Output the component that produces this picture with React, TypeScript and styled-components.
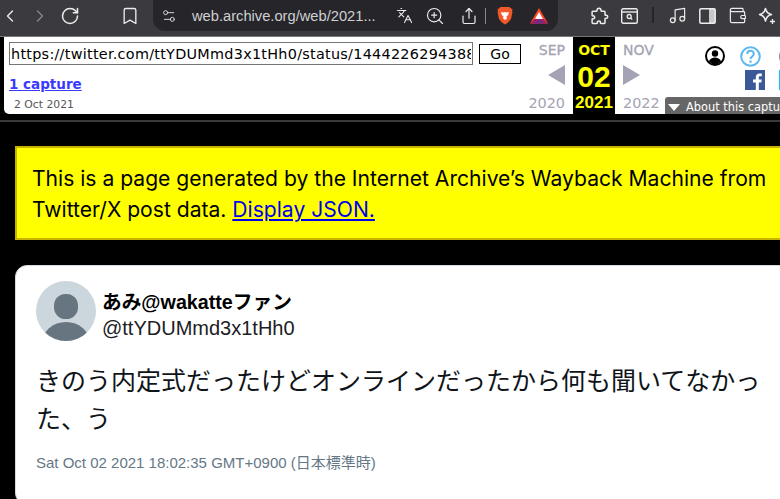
import React from 'react';
import styled, { createGlobalStyle } from 'styled-components';
import { Bookmark, ChevronLeft, ChevronRight, Languages, Music, RotateCw, Settings2, Share, Wallet, ZoomIn } from 'lucide-react';

const GlobalStyle = createGlobalStyle`
  html, body {
    margin: 0;
    padding: 0;
    background: #000;
    overflow: hidden;
  }
`;

const Page = styled.div`
  width: 780px;
  height: 499px;
  overflow: hidden;
  background: #000;
  font-family: 'Noto Sans CJK JP', 'Liberation Sans', sans-serif;
`;

const BrowserBar = styled.header`
  height: 37px;
  background: #3b3b3f;
  border-bottom: 1px solid #77777a;
  box-sizing: border-box;
  display: flex;
  align-items: flex-start;
`;

const NavButton = styled.span<{ dim?: boolean; w?: number; ml?: number }>`
  width: ${({ w = 20 }) => w}px;
  height: 31px;
  margin-left: ${({ ml = 0 }) => ml}px;
  flex: none;
  display: flex;
  align-items: center;
  justify-content: center;
  color: ${({ dim }) => (dim ? '#85858a' : '#ececee')};
`;

const AddressPill = styled.div`
  width: 405px;
  height: 31px;
  flex: none;
  margin-left: 13px;
  background: #26262a;
  border-radius: 0 0 12px 12px;
  display: flex;
  align-items: center;
  padding-left: 8px;
  box-sizing: border-box;
  color: #d5d5d8;
`;

const UrlText = styled.span`
  font-family: 'Liberation Sans', sans-serif;
  font-size: 14.7px;
  color: #cfcfd2;
  margin-left: 15px;
  width: 202px;
  white-space: nowrap;
  flex: none;
`;

const PillDivider = styled.span`
  width: 1px;
  height: 16px;
  background: #8a8a8d;
  margin: 0 10px 0 6px;
`;

const BarDivider = styled.span`
  width: 2px;
  height: 16px;
  margin: 7px 0 0 13px;
  background: #26262a;
`;

const Wayback = styled.section`
  height: 77px;
  margin-left: 4px;
  background: #fff;
  border-radius: 0 0 0 5px;
  display: flex;
  overflow: hidden;
`;

const SearchColumn = styled.div`
  width: 521px;
  flex: none;
  padding: 5px 0 0 5px;
  box-sizing: border-box;
`;

const SearchRow = styled.div`
  display: flex;
  align-items: center;
  gap: 6px;
`;

const UrlInput = styled.input`
  width: 464px;
  height: 23px;
  box-sizing: border-box;
  border: 1px solid #767676;
  padding: 0 1px;
  font-family: 'DejaVu Sans', 'Liberation Sans', sans-serif;
  font-size: 14.4px;
  letter-spacing: 0.27px;
  color: #000;
`;

const GoButton = styled.button`
  width: 42px;
  height: 20px;
  padding: 0;
  background: #fff;
  border: 1px solid #000;
  font-family: 'DejaVu Sans', sans-serif;
  font-size: 14px;
  line-height: 16px;
  color: #000;
`;

const CaptureLink = styled.a`
  display: block;
  margin-top: 10px;
  font-family: 'DejaVu Sans', sans-serif;
  font-weight: 700;
  font-size: 13.5px;
  line-height: 18px;
  color: #3a3aff;
  text-decoration: underline;
`;

const CaptureDate = styled.div`
  margin: 5px 0 0 5px;
  font-family: 'DejaVu Sans', sans-serif;
  font-size: 10.8px;
  line-height: 14px;
  color: #555;
`;

const MonthColumn = styled.div<{ current?: boolean; w: number; side?: 'left' | 'right' }>`
  width: ${({ w }) => w}px;
  height: 77px;
  flex: none;
  box-sizing: border-box;
  display: flex;
  flex-direction: column;
  align-items: ${({ side }) =>
    side === 'left' ? 'flex-end' : side === 'right' ? 'flex-start' : 'center'};
  padding: ${({ side }) =>
    side === 'left' ? '0 8px 0 0' : side === 'right' ? '0 0 0 8px' : '0'};
  font-family: 'DejaVu Sans', sans-serif;
  background: ${({ current }) => (current ? '#000' : '#fff')};
  color: ${({ current }) => (current ? '#ff0' : '#a3a3b4')};
`;

const MonthLabel = styled.div<{ current?: boolean }>`
  margin-top: 4px;
  font-size: 14px;
  line-height: 18px;
  font-weight: ${({ current }) => (current ? 700 : 400)};
  -webkit-text-stroke: ${({ current }) => (current ? '0' : '0.3px')};
`;

const DayLabel = styled.div`
  font-family: 'Liberation Sans', sans-serif;
  font-size: 30px;
  line-height: 32px;
  font-weight: 700;
  margin-top: 2px;
`;

const YearLabel = styled.div<{ current?: boolean }>`
  font-family: ${({ current }) => (current ? "'Liberation Sans', sans-serif" : "'DejaVu Sans', sans-serif")};
  font-size: ${({ current }) => (current ? '17px' : '14.4px')};
  line-height: 18px;
  margin-top: ${({ current }) => (current ? '1px' : '9px')};
  font-weight: ${({ current }) => (current ? 700 : 400)};
`;

const Arrow = styled.div<{ dir: 'left' | 'right' }>`
  width: 0;
  height: 0;
  margin-top: 6px;
  border-top: 10px solid transparent;
  border-bottom: 10px solid transparent;
  ${({ dir }) =>
    dir === 'left'
      ? 'border-right: 17px solid #a3a3b4;'
      : 'border-left: 17px solid #a3a3b4;'}
`;

const ToolsColumn = styled.div`
  flex: 1;
  min-width: 0;
  display: flex;
  flex-direction: column;
`;

const ToolIcons = styled.div`
  display: flex;
  height: 60px;
  margin-left: 40px;
`;

const ToolStack = styled.div<{ ml?: number }>`
  flex: none;
  margin-left: ${({ ml = 0 }) => ml}px;
  display: flex;
  flex-direction: column;
  padding-top: 9px;
`;

const FacebookSlot = styled.div`
  margin: 3px 0 0 5px;
  height: 20px;
`;

const TwitterSlot = styled.div`
  margin-top: 3px;
  height: 20px;
`;

const AboutTab = styled.div`
  width: 130px;
  height: 17px;
  box-sizing: border-box;
  padding: 3px 0 0 3px;
  background: #666;
  border-radius: 3px 0 0 0;
  color: #fff;
  font-family: 'DejaVu Sans', sans-serif;
  font-size: 11.4px;
  line-height: 14px;
  white-space: nowrap;
  display: flex;
  align-items: center;
  gap: 6px;
`;

const TabCaret = styled.span`
  width: 0;
  height: 0;
  border-left: 6px solid transparent;
  border-right: 6px solid transparent;
  border-top: 7px solid #fff;
`;

const Rule = styled.div`
  height: 2px;
  margin-top: 6px;
  background: #3a3a3a;
`;

const Notice = styled.div`
  width: 900px;
  height: 94px;
  margin: 24px 0 0 15px;
  box-sizing: border-box;
  border: 2px solid #c8b400;
  background: #ff0;
  padding: 15px 15px 0;
  font-family: 'Inter', 'Noto Sans CJK JP', sans-serif;
  font-size: 21.1px;
  line-height: 31px;
  color: #000;
`;

const NoticeLink = styled.a`
  color: #00e;
  text-decoration: underline;
`;

const TweetCard = styled.article`
  width: 900px;
  height: 240px;
  margin: 25px 0 0 15px;
  box-sizing: border-box;
  background: #fff;
  border: 1px solid #d5dde3;
  border-radius: 12px;
  padding: 15px 20px;
`;

const Author = styled.div`
  display: flex;
  gap: 6px;
`;

const Avatar = styled.svg`
  width: 60px;
  height: 60px;
  flex: none;
`;

const Names = styled.div`
  padding-top: 8px;
`;

const DisplayName = styled.div`
  font-family: 'Liberation Sans', 'Noto Sans CJK JP', sans-serif;
  font-size: 19.7px;
  line-height: 26px;
  font-weight: 700;
  color: #000;
`;

const Handle = styled.div`
  font-family: 'Liberation Sans', sans-serif;
  font-size: 20px;
  line-height: 26px;
  color: #1c2024;
`;

const TweetBody = styled.p`
  width: 730px;
  margin: 19px 0 0;
  font-size: 25px;
  line-height: 38px;
  color: #0f1419;
`;

const TweetDate = styled.div`
  margin-top: 17px;
  font-family: 'Liberation Sans', 'Noto Sans CJK JP', sans-serif;
  font-size: 15px;
  line-height: 20px;
  color: #657786;
`;

const BraveIcon = () => (
  <svg width="16" height="20" viewBox="0 0 16 20">
    <path d="M3.500 1h9l1.500 1.500 1.500.5-.5 2 .5 1-1.500 7-3 3.500L8 18.500 5 16.500 2 13 .5 6l.5-1-.5-2L2 2.500z" fill="#f1592a" />
    <path d="M4 6l2.500.5L8 6l1.500.5L12 6l-.8 3-1.700 1.200.5 2L8 14l-2-1.800.5-2L4.800 9z" fill="#fff" />
  </svg>
);

const BatIcon = () => (
  <svg width="18" height="16" viewBox="0 0 18 16">
    <polygon points="9,0 18,15.500 0,15.500" fill="#ff4724" />
    <polygon points="0,15.500 4.500,11 13.500,11 18,15.500" fill="#9e1f63" />
    <polygon points="4.500,15.500 9,11 13.500,15.500" fill="#662d91" />
    <polygon points="9,4 13,11 5,11" fill="#fff" />
  </svg>
);

const PuzzleIcon = () => (
  <svg width="18" height="18" viewBox="0 0 18 18" fill="none" stroke="currentColor" strokeWidth="1.500" strokeLinejoin="round">
    <path d="M6 3.500c0-3 4-3 4 0 0 .5.300.8 1 .8h2.200c.5 0 .8.300.8.800v2.400c0 .6.300.9.800.800 2.500-.6 2.500 3.600 0 3-.5-.1-.8.200-.8.800v3.400c0 .6-.3.900-.8.900h-3c-.6 0-.9-.3-.8-.8.400-2.200-3.400-2.200-3 0 .1.500-.2.800-.8.800H2c-.6 0-.9-.3-.9-.9v-3c0-.6.300-.9.800-.8 2.400.500 2.400-3.300 0-2.800-.5.100-.8-.2-.8-.8V5.100c0-.5.300-.8.800-.8H5c.7 0 1-.3 1-.8z" />
  </svg>
);

const ReaderIcon = () => (
  <svg width="17" height="16" viewBox="0 0 17 16" fill="none" stroke="currentColor" strokeWidth="1.400">
    <rect x="0.700" y="0.700" width="15.600" height="14.600" rx="1.500" />
    <path d="M.7 4h15.600" />
    <circle cx="8.200" cy="8.500" r="2" strokeWidth="1.300" />
    <path d="M9.700 10l1.500 1.500" strokeWidth="1.300" />
  </svg>
);

const SidebarIcon = () => (
  <svg width="17" height="16" viewBox="0 0 17 16">
    <rect x="0.800" y="0.800" width="15.400" height="14.400" rx="1.200" fill="none" stroke="currentColor" strokeWidth="1.500" />
    <rect x="10" y="1" width="6" height="14" fill="currentColor" opacity="0.8" />
  </svg>
);

const SparkleIcon = () => (
  <svg width="18" height="18" viewBox="0 0 18 18" fill="none" stroke="currentColor" strokeWidth="1.500" strokeLinejoin="round">
    <path d="M7.500 1.500c.8 3.800 2.300 5.300 6 6-3.700.8-5.200 2.300-6 6.500-.8-4.200-2.300-5.700-6-6.500 3.700-.7 5.200-2.200 6-6z" />
    <path d="M14.500 12v5M12 14.500h5" strokeWidth="1.300" />
  </svg>
);

const ProfileIcon = () => (
  <svg width="20" height="20" viewBox="0 0 20 20">
    <circle cx="10" cy="10" r="9" fill="#fff" stroke="#000" strokeWidth="2" />
    <circle cx="10" cy="7.500" r="3.200" fill="#000" />
    <path d="M3.800 15.500c1.500-3 3.500-4 6.200-4s4.700 1 6.200 4a8.400 8.400 0 0 1-12.400 0z" fill="#000" />
  </svg>
);

const HelpIcon = () => (
  <svg width="21" height="21" viewBox="0 0 21 21">
    <circle cx="10.500" cy="10.500" r="9.300" fill="none" stroke="#5cb8f0" strokeWidth="2" />
    <path d="M7.200 8c0-4.400 6.600-4.400 6.600 0 0 2.400-3.300 2.600-3.300 5" fill="none" stroke="#5cb8f0" strokeWidth="2" />
    <rect x="9.400" y="14.500" width="2.200" height="2.200" fill="#5cb8f0" />
  </svg>
);

const FacebookIcon = () => (
  <svg width="20" height="20" viewBox="0 0 20 20">
    <rect width="20" height="20" fill="#3b5998" />
    <path d="M13.800 20v-7.600h2.500l.4-3h-2.900V7.600c0-.9.300-1.400 1.500-1.400h1.500V3.500c-.3 0-1.200-.1-2.200-.1-2.300 0-3.800 1.400-3.800 3.900v2.100H8v3h2.800V20z" fill="#fff" />
  </svg>
);

const ShareCircle = () => (
  <svg width="21" height="21" viewBox="0 0 21 21">
    <circle cx="10.500" cy="10.500" r="10.500" fill="#8a8a8a" />
  </svg>
);

const TwitterSquare = () => (
  <svg width="20" height="20" viewBox="0 0 20 20">
    <rect width="20" height="20" fill="#1dbcf2" />
    <path d="M3 14c5 3 12 1 12-7l1.500-1.500-2-.3C13 3.500 10 4.500 10 7 7.500 7 6 6 4.500 4.500c-.7 1.500 0 3 1 4L4 8c0 1.500 1 2.500 2.500 3H5c.5 1 1.500 1.700 2.500 1.700-1 .9-2.800 1.300-4.500 1.300z" fill="#fff" />
  </svg>
);

const AvatarGraphic = () => (
  <Avatar viewBox="0 0 60 60">
    <defs>
      <clipPath id="avatar-clip">
        <circle cx="30" cy="30" r="30" />
      </clipPath>
    </defs>
    <circle cx="30" cy="30" r="30" fill="#ccd6dd" />
    <g clipPath="url(#avatar-clip)" fill="#66757f">
      <rect x="18" y="13" width="24" height="25" rx="11.500" />
      <ellipse cx="30" cy="62" rx="24" ry="21" />
    </g>
  </Avatar>
);

const App: React.FC = () => (
  <Page>
    <GlobalStyle />
    <BrowserBar>
      <NavButton><ChevronLeft size={30} strokeWidth={1.6} /></NavButton>
      <NavButton dim ml={10}><ChevronRight size={30} strokeWidth={1.6} /></NavButton>
      <NavButton ml={10}><RotateCw size={20} strokeWidth={1.8} /></NavButton>
      <NavButton ml={40}><Bookmark size={20} strokeWidth={1.6} /></NavButton>
      <AddressPill>
        <Settings2 size={16} strokeWidth={1.5} />
        <UrlText>web.archive.org/web/2021...</UrlText>
        <NavButton><Languages size={17} strokeWidth={1.5} /></NavButton>
        <NavButton ml={11}><ZoomIn size={20} strokeWidth={1.4} /></NavButton>
        <NavButton ml={14}><Share size={18} strokeWidth={1.6} /></NavButton>
        <PillDivider />
        <NavButton w={18}><BraveIcon /></NavButton>
        <NavButton ml={15}><BatIcon /></NavButton>
      </AddressPill>
      <NavButton ml={32}><PuzzleIcon /></NavButton>
      <NavButton ml={9}><ReaderIcon /></NavButton>
      <BarDivider />
      <NavButton ml={13}><Music size={19} strokeWidth={1.5} /></NavButton>
      <NavButton ml={10}><SidebarIcon /></NavButton>
      <NavButton ml={10}><Wallet size={19} strokeWidth={1.5} /></NavButton>
      <NavButton ml={10}><SparkleIcon /></NavButton>
    </BrowserBar>
    <Wayback>
      <SearchColumn>
        <SearchRow>
          <UrlInput readOnly value="https://twitter.com/ttYDUMmd3x1tHh0/status/1444226294388" />
          <GoButton>Go</GoButton>
        </SearchRow>
        <CaptureLink>1 capture</CaptureLink>
        <CaptureDate>2 Oct 2021</CaptureDate>
      </SearchColumn>
      <MonthColumn w={48} side="left">
        <MonthLabel>SEP</MonthLabel>
        <Arrow dir="left" />
        <YearLabel>2020</YearLabel>
      </MonthColumn>
      <MonthColumn current w={42}>
        <MonthLabel current>OCT</MonthLabel>
        <DayLabel>02</DayLabel>
        <YearLabel current>2021</YearLabel>
      </MonthColumn>
      <MonthColumn w={50} side="right">
        <MonthLabel>NOV</MonthLabel>
        <Arrow dir="right" />
        <YearLabel>2022</YearLabel>
      </MonthColumn>
      <ToolsColumn>
        <ToolIcons>
          <ToolStack><ProfileIcon /></ToolStack>
          <ToolStack ml={15}>
            <HelpIcon />
            <FacebookSlot><FacebookIcon /></FacebookSlot>
          </ToolStack>
          <ToolStack ml={14}>
            <ShareCircle />
            <TwitterSlot><TwitterSquare /></TwitterSlot>
          </ToolStack>
        </ToolIcons>
        <AboutTab><TabCaret />About this capture</AboutTab>
      </ToolsColumn>
    </Wayback>
    <Rule />
    <Notice>
      This is a page generated by the Internet Archive’s Wayback Machine from<br />
      Twitter/X post data. <NoticeLink>Display JSON.</NoticeLink>
    </Notice>
    <TweetCard>
      <Author>
        <AvatarGraphic />
        <Names>
          <DisplayName>あみ@wakatteファン</DisplayName>
          <Handle>@ttYDUMmd3x1tHh0</Handle>
        </Names>
      </Author>
      <TweetBody>きのう内定式だったけどオンラインだったから何も聞いてなかった、う</TweetBody>
      <TweetDate>Sat Oct 02 2021 18:02:35 GMT+0900 (日本標準時)</TweetDate>
    </TweetCard>
  </Page>
);

export default App;
